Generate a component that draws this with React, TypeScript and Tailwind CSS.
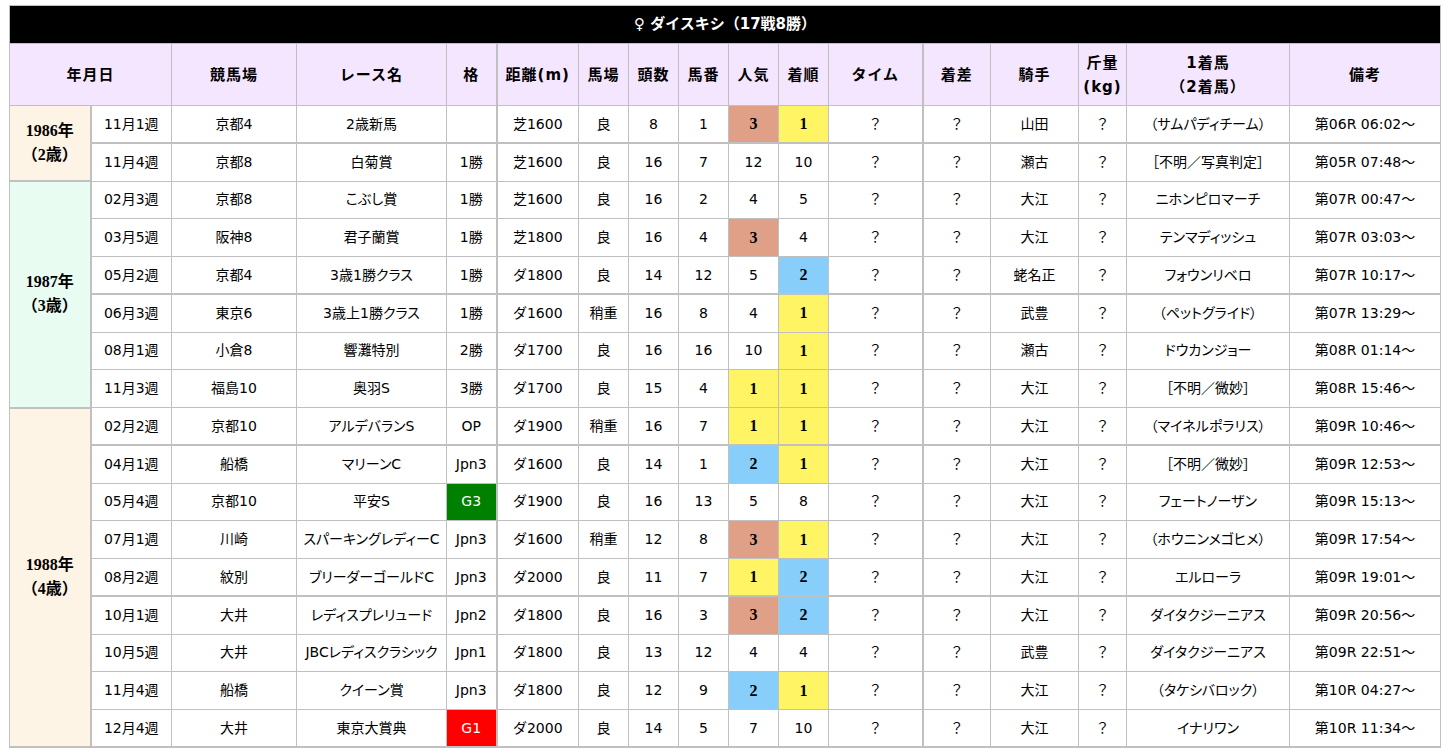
import React from 'react';

type Hl = 's' | 'y' | 'b' | '';

interface Race {
  date: string;
  course: string;
  name: string;
  grade: string;
  dist: string;
  cond: string;
  heads: string;
  num: string;
  pop: [string, Hl];
  rank: [string, Hl];
  jockey: string;
  winner: string;
  note: string;
}

const r = (
  date: string, course: string, name: string, grade: string, dist: string, cond: string,
  heads: string, num: string, pop: [string, Hl], rank: [string, Hl], jockey: string, winner: string, note: string
): Race => ({ date, course, name, grade, dist, cond, heads, num, pop, rank, jockey, winner, note });

const years: { label: string; age: string; bg: string; races: Race[] }[] = [
  {
    label: '1986年', age: '（2歳）', bg: 'bg-[#fdf4e6]',
    races: [
      r('11月1週', '京都4', '2歳新馬', '', '芝1600', '良', '8', '1', ['3', 's'], ['1', 'y'], '山田', '（サムパディチーム）', '第06R 06:02～'),
      r('11月4週', '京都8', '白菊賞', '1勝', '芝1600', '良', '16', '7', ['12', ''], ['10', ''], '瀬古', '［不明／写真判定］', '第05R 07:48～'),
    ],
  },
  {
    label: '1987年', age: '（3歳）', bg: 'bg-[#e8fcf2]',
    races: [
      r('02月3週', '京都8', 'こぶし賞', '1勝', '芝1600', '良', '16', '2', ['4', ''], ['5', ''], '大江', 'ニホンピロマーチ', '第07R 00:47～'),
      r('03月5週', '阪神8', '君子蘭賞', '1勝', '芝1800', '良', '16', '4', ['3', 's'], ['4', ''], '大江', 'テンマディッシュ', '第07R 03:03～'),
      r('05月2週', '京都4', '3歳1勝クラス', '1勝', 'ダ1800', '良', '14', '12', ['5', ''], ['2', 'b'], '蛯名正', 'フォウンリベロ', '第07R 10:17～'),
      r('06月3週', '東京6', '3歳上1勝クラス', '1勝', 'ダ1600', '稍重', '16', '8', ['4', ''], ['1', 'y'], '武豊', '（ペットグライド）', '第07R 13:29～'),
      r('08月1週', '小倉8', '響灘特別', '2勝', 'ダ1700', '良', '16', '16', ['10', ''], ['1', 'y'], '瀬古', 'ドウカンジョー', '第08R 01:14～'),
      r('11月3週', '福島10', '奥羽S', '3勝', 'ダ1700', '良', '15', '4', ['1', 'y'], ['1', 'y'], '大江', '［不明／微妙］', '第08R 15:46～'),
    ],
  },
  {
    label: '1988年', age: '（4歳）', bg: 'bg-[#fdf4e6]',
    races: [
      r('02月2週', '京都10', 'アルデバランS', 'OP', 'ダ1900', '稍重', '16', '7', ['1', 'y'], ['1', 'y'], '大江', '（マイネルポラリス）', '第09R 10:46～'),
      r('04月1週', '船橋', 'マリーンC', 'Jpn3', 'ダ1600', '良', '14', '1', ['2', 'b'], ['1', 'y'], '大江', '［不明／微妙］', '第09R 12:53～'),
      r('05月4週', '京都10', '平安S', 'G3', 'ダ1900', '良', '16', '13', ['5', ''], ['8', ''], '大江', 'フェートノーザン', '第09R 15:13～'),
      r('07月1週', '川崎', 'スパーキングレディーC', 'Jpn3', 'ダ1600', '稍重', '12', '8', ['3', 's'], ['1', 'y'], '大江', '（ホウニンメゴヒメ）', '第09R 17:54～'),
      r('08月2週', '紋別', 'ブリーダーゴールドC', 'Jpn3', 'ダ2000', '良', '11', '7', ['1', 'y'], ['2', 'b'], '大江', 'エルローラ', '第09R 19:01～'),
      r('10月1週', '大井', 'レディスプレリュード', 'Jpn2', 'ダ1800', '良', '16', '3', ['3', 's'], ['2', 'b'], '大江', 'ダイタクジーニアス', '第09R 20:56～'),
      r('10月5週', '大井', 'JBCレディスクラシック', 'Jpn1', 'ダ1800', '良', '13', '12', ['4', ''], ['4', ''], '武豊', 'ダイタクジーニアス', '第09R 22:51～'),
      r('11月4週', '船橋', 'クイーン賞', 'Jpn3', 'ダ1800', '良', '12', '9', ['2', 'b'], ['1', 'y'], '大江', '（タケシバロック）', '第10R 04:27～'),
      r('12月4週', '大井', '東京大賞典', 'G1', 'ダ2000', '良', '14', '5', ['7', ''], ['10', ''], '大江', 'イナリワン', '第10R 11:34～'),
    ],
  },
];

// bold serif numbers for popularity / finish highlights
const hlBg: Record<Hl, string> = {
  s: 'bg-[#e0a088] font-bold text-[16px] [font-family:"Liberation_Serif","Noto_Sans_CJK_JP",serif]',
  y: 'bg-[#fff564] font-bold text-[16px] [font-family:"Liberation_Serif","Noto_Sans_CJK_JP",serif]',
  b: 'bg-[#87cefa] font-bold text-[16px] [font-family:"Liberation_Serif","Noto_Sans_CJK_JP",serif]',
  '': '',
};

const gradeCls = (g: string) => {
  if (g === 'G1') return 'bg-[#ff0000] text-white';
  if (g === 'G3') return 'bg-[#008000] text-white';
  return '';
};

const cell = 'border border-[#c0c0c0] text-center align-middle p-0';
const palt = "[font-feature-settings:'palt']";

export default function App() {
  let idx = 0;
  return (
    <div className="pl-[9px] pt-[5px] bg-white min-h-screen text-black text-[14px] [font-family:'DejaVu_Sans','Noto_Sans_CJK_JP',sans-serif]">
      <table className="border-collapse table-fixed w-[1431px] border border-[#c0c0c0]">
        <colgroup>
          <col className="w-[81px]" />
          <col className="w-[81px]" />
          <col className="w-[125px]" />
          <col className="w-[150px]" />
          <col className="w-[50px]" />
          <col className="w-[82px]" />
          <col className="w-[50px]" />
          <col className="w-[50px]" />
          <col className="w-[50px]" />
          <col className="w-[50px]" />
          <col className="w-[50px]" />
          <col className="w-[94px]" />
          <col className="w-[68px]" />
          <col className="w-[88px]" />
          <col className="w-[48px]" />
          <col className="w-[163px]" />
          <col className="w-[151px]" />
        </colgroup>
        <thead>
          <tr className="h-[38px]">
            <th colSpan={17} className={`${cell} bg-black text-white font-bold text-[15px]`}>
              ♀ ダイスキシ（17戦8勝）
            </th>
          </tr>
          <tr className="h-[62px] bg-[#f3e6fe] font-bold leading-6 text-[15px] tracking-[1px]">
            <th colSpan={2} className={cell}>年月日</th>
            <th className={cell}>競馬場</th>
            <th className={cell}>レース名</th>
            <th className={`${cell} border-r-2`}>格</th>
            <th className={cell}>距離(m)</th>
            <th className={cell}>馬場</th>
            <th className={cell}>頭数</th>
            <th className={cell}>馬番</th>
            <th className={cell}>人気</th>
            <th className={cell}>着順</th>
            <th className={`${cell} border-r-2`}>タイム</th>
            <th className={cell}>着差</th>
            <th className={cell}>騎手</th>
            <th className={cell}>斤量<br />(kg)</th>
            <th className={cell}>1着馬<br />（2着馬）</th>
            <th className={cell}>備考</th>
          </tr>
        </thead>
        <tbody>
          {years.map((y) =>
            y.races.map((race, i) => {
              const thick = idx % 4 === 0 ? 'border-b-2' : '';
              idx++;
              return (
                <tr key={y.label + i} className="h-[37.75px]">
                  {i === 0 && (
                    <td
                      rowSpan={y.races.length}
                      className={`${cell} border-r-2 border-b-2 ${y.bg} font-bold leading-6 text-[16px] [font-family:"Liberation_Serif","Noto_Sans_CJK_JP",serif]`}
                    >
                      {y.label}
                      <br />
                      {y.age}
                    </td>
                  )}
                  <td className={`${cell} ${thick}`}>{race.date}</td>
                  <td className={`${cell} ${thick}`}>{race.course}</td>
                  <td className={`${cell} ${thick} whitespace-nowrap ${palt}`}>{race.name}</td>
                  <td className={`${cell} ${thick} border-r-2 ${gradeCls(race.grade)}`}>{race.grade}</td>
                  <td className={`${cell} ${thick}`}>{race.dist}</td>
                  <td className={`${cell} ${thick}`}>{race.cond}</td>
                  <td className={`${cell} ${thick}`}>{race.heads}</td>
                  <td className={`${cell} ${thick}`}>{race.num}</td>
                  <td className={`${cell} ${thick} ${hlBg[race.pop[1]]}`}>{race.pop[0]}</td>
                  <td className={`${cell} ${thick} ${hlBg[race.rank[1]]}`}>{race.rank[0]}</td>
                  <td className={`${cell} ${thick} border-r-2`}>？</td>
                  <td className={`${cell} ${thick}`}>？</td>
                  <td className={`${cell} ${thick}`}>{race.jockey}</td>
                  <td className={`${cell} ${thick}`}>？</td>
                  <td className={`${cell} ${thick} whitespace-nowrap ${palt}`}>{race.winner}</td>
                  <td className={`${cell} ${thick} whitespace-nowrap`}>{race.note}</td>
                </tr>
              );
            })
          )}
        </tbody>
      </table>
    </div>
  );
}
